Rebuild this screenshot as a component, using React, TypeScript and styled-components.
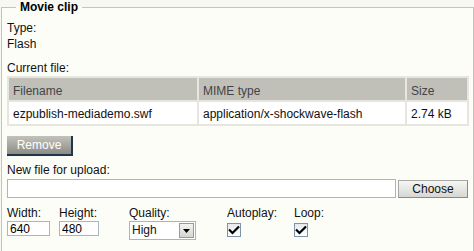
import React from "react";
import styled, { createGlobalStyle } from "styled-components";

const Global = createGlobalStyle`
  html, body { margin: 0; padding: 0; background: #f8f8f3; }
  body { font-family: "Liberation Sans", Arial, sans-serif; font-size: 12px; color: #111; }
`;

const Fieldset = styled.fieldset`
  margin: 0 0 0 1px;
  padding: 6px 4px 12px 5px;
  border: 1px solid #c4c4bc;
  background: #fdfdf8;
  min-width: 0;
`;

const Legend = styled.legend`
  margin-left: 9px;
  padding: 0 4px;
  font-weight: bold;
  font-size: 12px;
  line-height: 14px;
  color: #000;
`;

const Label = styled.div<{ $mt?: number }>`
  line-height: 16px;
  margin-top: ${(p) => p.$mt ?? 0}px;
  color: #111;
  white-space: nowrap;
`;

const Value = styled.div`
  line-height: 16px;
  color: #111;
`;

const Table = styled.table`
  width: 100%;
  border-collapse: separate;
  border-spacing: 2px;
  background: #e6e6df;
  font-size: 12px;
`;

const Th = styled.th<{ $w?: number }>`
  background: #c0c0b8;
  color: #444;
  font-weight: normal;
  text-align: left;
  height: 22px;
  padding: 4px 4px 0 4px;
  box-sizing: border-box;
  width: ${(p) => (p.$w ? `${p.$w}px` : "auto")};
`;

const Td = styled.td`
  background: #ffffff;
  color: #111;
  height: 22px;
  padding: 1px 4px 0 4px;
  box-sizing: border-box;
  white-space: nowrap;
`;

const RemoveButton = styled.button`
  display: block;
  margin-top: 10px;
  width: 66px;
  height: 20px;
  padding: 0;
  border: none;
  border-right: 2px solid #22364a;
  border-bottom: 2px solid #22364a;
  background: linear-gradient(#c2c2bb, #8c8c86);
  color: #fff;
  font-family: "Liberation Sans", Arial, sans-serif;
  font-size: 12px;
  box-sizing: border-box;
`;

const UploadRow = styled.div`
  display: flex;
  gap: 2px;
  margin-top: 1px;
  align-items: flex-start;
`;

const TextInput = styled.input<{ $w?: number; $h?: number }>`
  box-sizing: border-box;
  width: ${(p) => (p.$w ? `${p.$w}px` : "auto")};
  flex: ${(p) => (p.$w ? "none" : "1")};
  height: ${(p) => p.$h ?? 19}px;
  margin: 0;
  border: 1px solid #a9b4c6;
  background: #fff;
  font-family: "Liberation Sans", Arial, sans-serif;
  font-size: 12px;
  padding: 0 2px;
  color: #000;
  outline: none;
`;

const ChooseButton = styled.button`
  box-sizing: border-box;
  width: 70px;
  height: 18px;
  margin-top: 1px;
  margin-right: 1px;
  padding: 0;
  border: 1px solid #a8a8a8;
  border-bottom-color: #8a8a8a;
  border-right-color: #8a8a8a;
  background: linear-gradient(#f6f6f4, #d6d6d2);
  color: #111;
  font-family: "Liberation Sans", Arial, sans-serif;
  font-size: 12px;
`;

const OptionsRow = styled.div`
  display: flex;
  margin-top: 7px;
`;

const Col = styled.div<{ $w: number }>`
  width: ${(p) => p.$w}px;
  flex: none;
  display: flex;
  flex-direction: column;
  align-items: flex-start;
`;

const SelectBox = styled.div`
  box-sizing: border-box;
  width: 67px;
  height: 19px;
  border: 1px solid #a9b4c6;
  background: #fff;
  display: flex;
  align-items: center;
  padding-left: 2px;
  font-size: 12px;
`;

const SelectText = styled.span`
  flex: 1;
  line-height: 17px;
`;

const SelectArrow = styled.span`
  box-sizing: border-box;
  width: 15px;
  height: 15px;
  margin-right: 1px;
  border: 1px solid #9a9a9a;
  background: linear-gradient(#f4f4f2, #d4d4d0);
  display: flex;
  align-items: center;
  justify-content: center;
`;

const CheckBox = styled.span`
  box-sizing: border-box;
  width: 14px;
  height: 14px;
  margin-top: 2px;
  border: 1px solid #7f93ad;
  background: linear-gradient(#e6e9ee, #ffffff);
  display: flex;
  align-items: center;
  justify-content: center;
`;

const Check = () => (
  <svg width="12" height="10" viewBox="0 0 12 10">
    <path d="M1 4.5 L4.5 8 L11 1.5" stroke="#000" strokeWidth="2.2" fill="none" />
  </svg>
);

export default function App() {
  return (
    <>
      <Global />
      <Fieldset>
        <Legend>Movie clip</Legend>
        <Label>Type:</Label>
        <Value>Flash</Value>
        <Label $mt={8}>Current file:</Label>
        <Table>
          <thead>
            <tr>
              <Th $w={188}>Filename</Th>
              <Th>MIME type</Th>
              <Th $w={60}>Size</Th>
            </tr>
          </thead>
          <tbody>
            <tr>
              <Td>ezpublish-mediademo.swf</Td>
              <Td>application/x-shockwave-flash</Td>
              <Td>2.74 kB</Td>
            </tr>
          </tbody>
        </Table>
        <RemoveButton>Remove</RemoveButton>
        <Label $mt={6}>New file for upload:</Label>
        <UploadRow>
          <TextInput defaultValue="" />
          <ChooseButton>Choose</ChooseButton>
        </UploadRow>
        <OptionsRow>
          <Col $w={52}>
            <Label>Width:</Label>
            <TextInput $w={43} $h={15} defaultValue="640" />
          </Col>
          <Col $w={70}>
            <Label>Height:</Label>
            <TextInput $w={40} $h={15} defaultValue="480" />
          </Col>
          <Col $w={98}>
            <Label>Quality:</Label>
            <SelectBox>
              <SelectText>High</SelectText>
              <SelectArrow>
                <svg width="7" height="4" viewBox="0 0 7 4">
                  <path d="M0 0 H7 L3.5 4 Z" fill="#000" />
                </svg>
              </SelectArrow>
            </SelectBox>
          </Col>
          <Col $w={67}>
            <Label>Autoplay:</Label>
            <CheckBox>
              <Check />
            </CheckBox>
          </Col>
          <Col $w={50}>
            <Label>Loop:</Label>
            <CheckBox>
              <Check />
            </CheckBox>
          </Col>
        </OptionsRow>
      </Fieldset>
    </>
  );
}
